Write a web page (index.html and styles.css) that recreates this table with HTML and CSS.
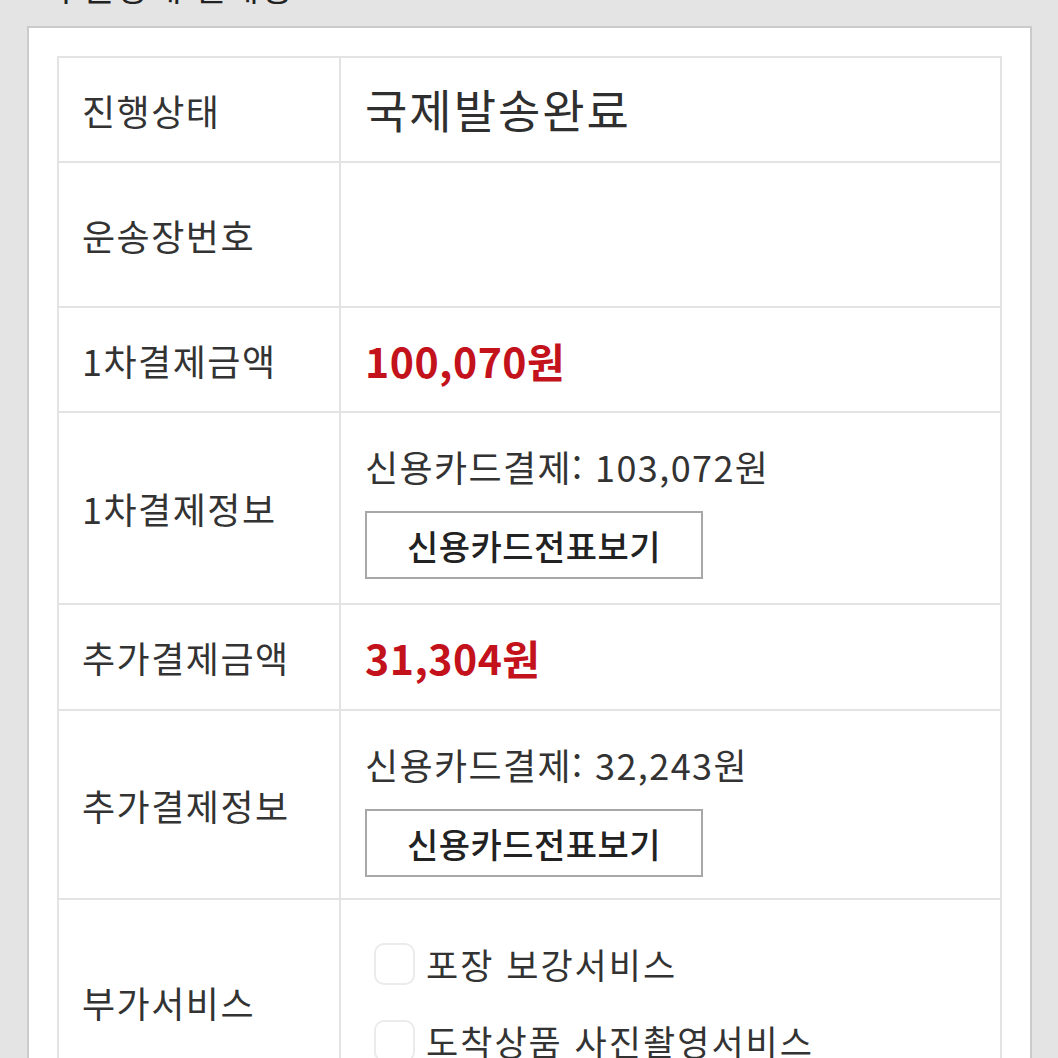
FILE: index.html
```html
<!DOCTYPE html>
<html lang="ko">
<head>
<meta charset="utf-8">
<link rel="stylesheet" href="styles.css">
</head>
<body>
<div class="page">
  <h2 class="title"><span>주문상세 결제정보</span></h2>
  <div class="card">
    <div class="info">
      <div class="row r1">
        <div class="label">진행상태</div>
        <div class="value status">국제발송완료</div>
      </div>
      <div class="row r2">
        <div class="label">운송장번호</div>
        <div class="value"></div>
      </div>
      <div class="row r3">
        <div class="label">1차결제금액</div>
        <div class="value price">100,070원</div>
      </div>
      <div class="row r4">
        <div class="label">1차결제정보</div>
        <div class="value stack">
          <div class="pay">신용카드결제: 103,072원</div>
          <button class="btn" type="button">신용카드전표보기</button>
        </div>
      </div>
      <div class="row r5">
        <div class="label">추가결제금액</div>
        <div class="value price">31,304원</div>
      </div>
      <div class="row r6">
        <div class="label">추가결제정보</div>
        <div class="value stack">
          <div class="pay">신용카드결제: 32,243원</div>
          <button class="btn" type="button">신용카드전표보기</button>
        </div>
      </div>
      <div class="row r7">
        <div class="label">부가서비스</div>
        <div class="value options">
          <label class="opt"><span class="box"></span><span>포장 보강서비스</span></label>
          <label class="opt"><span class="box"></span><span>도착상품 사진촬영서비스</span></label>
        </div>
      </div>
    </div>
  </div>
</div>
</body>
</html>
```

FILE: styles.css
```css
* { box-sizing: border-box; }
html, body {
  margin: 0;
  padding: 0;
  background: #e4e4e4;
  font-family: "Noto Sans CJK KR", "Noto Sans", sans-serif;
  color: #333;
}
.page {
  padding: 0 26px 0 27px;
}
.title {
  margin: 0;
  height: 26px;
  overflow: hidden;
  padding-left: 23px;
  font-weight: 400;
}
.title span {
  display: block;
  margin-top: -32px;
  font-size: 35px;
  line-height: 36px;
  letter-spacing: 1px;
  color: #222;
}
.card {
  background: #fff;
  border: 2px solid #cbcbcb;
  border-bottom: none;
  padding: 28px 28px 0 28px;
}
.info {
  border: 2px solid #e3e3e3;
  border-bottom: none;
}
.row {
  display: grid;
  grid-template-columns: 282px 1fr;
  border-bottom: 2px solid #e3e3e3;
}
.r1 { min-height: 105px; }
.r2 { min-height: 145px; }
.r3 { min-height: 105px; }
.r4 { min-height: 192px; }
.r5 { min-height: 106px; }
.r6 { min-height: 189px; }
.label {
  display: flex;
  align-items: center;
  padding-left: 23px;
  border-right: 2px solid #e3e3e3;
  font-size: 36px;
  letter-spacing: 1.5px;
  color: #333;
}
.value {
  display: flex;
  align-items: center;
  padding-left: 24px;
  font-size: 35px;
}
.status {
  font-size: 46px;
  letter-spacing: 2px;
  color: #2f2f2f;
  padding-bottom: 4px;
}
.price {
  font-size: 41px;
  font-weight: 700;
  letter-spacing: 0.5px;
  color: #c3121c;
}
.stack {
  flex-direction: column;
  align-items: flex-start;
  justify-content: flex-start;
  padding-top: 31px;
}
.pay {
  font-size: 36px;
  line-height: 44px;
  letter-spacing: 1.4px;
  color: #333;
}
.btn {
  margin-top: 23px;
  width: 338px;
  height: 68px;
  background: #fff;
  border: 2px solid #a8a8a8;
  font-family: inherit;
  font-size: 34px;
  font-weight: 500;
  letter-spacing: 0.5px;
  color: #222;
  padding: 0;
}
.options {
  flex-direction: column;
  align-items: flex-start;
  padding-top: 25px;
  padding-bottom: 25px;
  padding-left: 33px;
}
.opt {
  display: flex;
  align-items: center;
  height: 77px;
  gap: 11px;
  font-size: 35px;
  letter-spacing: 2px;
  color: #333;
}
.box {
  width: 41px;
  height: 42px;
  border: 2px solid #ebebeb;
  border-radius: 10px;
  background: #fff;
}
```
